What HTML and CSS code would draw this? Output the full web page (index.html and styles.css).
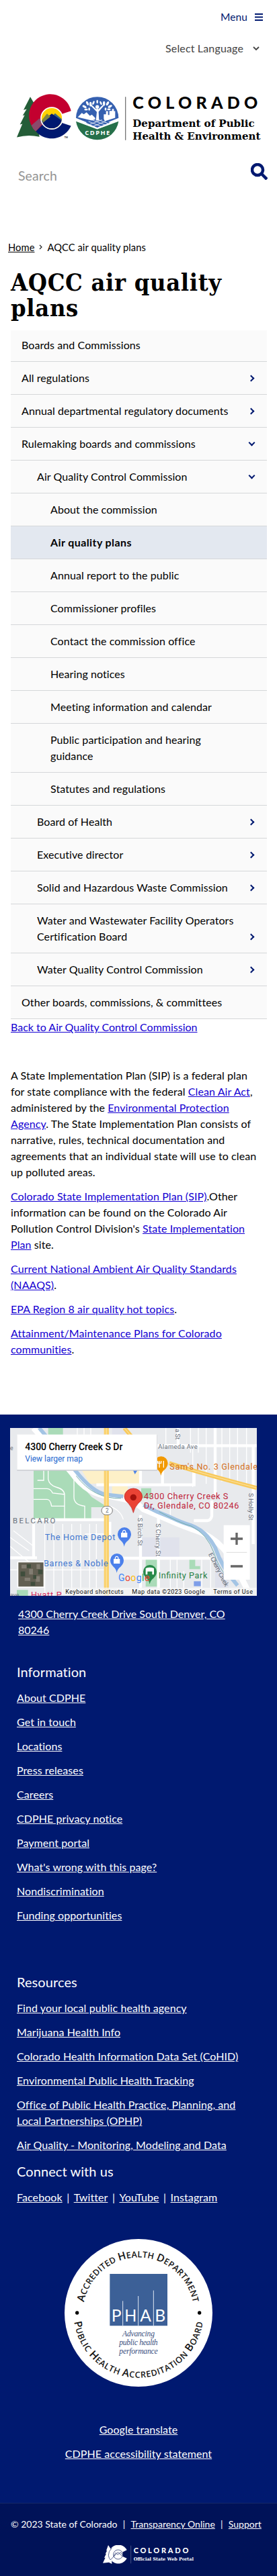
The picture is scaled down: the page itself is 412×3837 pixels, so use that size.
FILE: index.html
```html
<!DOCTYPE html>
<html lang="en">
<head>
<meta charset="utf-8">
<title>AQCC air quality plans</title>
<link rel="stylesheet" href="styles.css">
</head>
<body>
<header class="header">
  <div class="menu-row"><span class="menu-label">Menu</span>
    <svg class="burger" viewBox="0 0 12 11"><path d="M0 1h12M0 5.5h12M0 10h12"/></svg></div>
  <div class="lang-row"><span class="lang-label">Select Language</span>
    <svg class="lang-chev" viewBox="0 0 10 8"><path d="M1 2l4 4 4-4"/></svg></div>
  <svg class="logo" viewBox="75 432 1089 194">
    <path fill="#245d38" d="M135 432l25 42-7 2 18 38-10 2 15 95q-50-12-101 2l25-60-11 3 21-42-9 2 18-29-14 4z"/>
    <path fill="#c3002f" d="M317 495A95 96 0 1 0 160 587l71-59 41-18z"/>
    <path fill="#8a4a6b" d="M140 560l36-32 18 20-34 39q-14-11-20-27z"/>
    <path fill="#001970" d="M317 562A95 96 0 0 1 160 587l71-72 41 32z"/>
    <circle cx="231" cy="528" r="48" fill="#ffd100"/>
    <path fill="#82883e" d="M185 540l24-31 18 18 17-16 33 24v15l-92 1z"/>
    <path fill="#386685" d="M215 535l31-29 30 26-10 15z"/>
    <path fill="#001970" d="M184 541l11-4 36-30 45 32a48 48 0 0 1-92 2z"/>
    <path fill="#82883e" d="M191 531l19-24 15 14-35 28z"/>
    <circle cx="231" cy="528" r="48" fill="none" stroke="#fff" stroke-width="5"/>
    <text x="287" y="619" font-family="Lato" font-size="10" font-weight="700">TM</text>
    <circle cx="434" cy="528" r="96" fill="#fff"/>
    <path fill="#3560b0" d="M339 527a95 95 0 0 1 190 0l-95 38z"/>
    <path fill="#26704a" d="M339 542l95 35 95-35a96 96 0 0 1-190 0z"/>
    <path fill="#fff" d="M347 523l18-19 9 6 12-9 15 16 9-5 15 15v15zM463 530v-20h10v-14h9v17h6v-18h12v-9h8v10h6v30l-47 15z"/>
    <path fill="#3560b0" d="M383 548l52-19 56 19-57 22z"/>
    <path stroke="#fff" stroke-width="2.5" fill="none" d="M395 542l60 24M412 536l58 22M430 531l52 20M472 541l-56 23M455 535l-54 20"/>
    <path fill="#fff" d="M428 538l4-38-28-29 4-4 21 21 5-5 5 5 20-20 4 4-23 27 2 39z"/>
    <circle cx="434" cy="477" r="8" fill="#fff"/>
    <g fill="#fff"><ellipse cx="377" cy="476" rx="10" ry="5" transform="rotate(30 377 476)"/><ellipse cx="390" cy="461" rx="5" ry="10" transform="rotate(-25 390 461)"/><ellipse cx="404" cy="465" rx="5" ry="10"/><ellipse cx="417" cy="459" rx="4" ry="9" transform="rotate(25 417 459)"/><ellipse cx="434" cy="454" rx="4" ry="8"/><ellipse cx="450" cy="460" rx="4" ry="9" transform="rotate(-25 450 460)"/><ellipse cx="464" cy="462" rx="5" ry="10"/><ellipse cx="480" cy="462" rx="5" ry="10" transform="rotate(30 480 462)"/><ellipse cx="491" cy="475" rx="10" ry="5" transform="rotate(-30 491 475)"/><ellipse cx="398" cy="487" rx="4" ry="7"/><ellipse cx="471" cy="487" rx="4" ry="7"/><ellipse cx="384" cy="489" rx="8" ry="4"/><ellipse cx="486" cy="488" rx="8" ry="4"/></g>
    <path stroke="#fff" stroke-width="6" fill="none" d="M338 536l96 37 96-37"/>
    <text x="379" y="602" font-family="Open Sans" font-weight="700" font-size="28" fill="#fff" textLength="111">CDPHE</text>
    <path stroke="#777" stroke-width="4" d="M560 432v194"/>
    <text x="592" y="487" font-family="Lato" font-weight="900" font-size="75" textLength="558">COLORADO</text>
    <text class="slab" x="592" y="568" font-size="47" textLength="544" lengthAdjust="spacingAndGlyphs">Department of Public</text>
    <text class="slab" x="592" y="623" font-size="47" textLength="570" lengthAdjust="spacingAndGlyphs">Health &amp; Environment</text>
  </svg>
  <div class="search-row"><span class="search-label">Search</span>
    <svg class="search-icon" viewBox="0 0 25 25"><circle cx="10" cy="10" r="8" /><path d="M16 16l8 8"/></svg></div>
</header>
<main class="main">
  <nav class="crumbs"><a href="#">Home</a><svg class="crumb-sep" viewBox="0 0 5 8"><path d="M1 1l3 3-3 3"/></svg><span>AQCC air quality plans</span></nav>
  <h1 class="title">AQCC air quality<br>plans</h1>
  <ul class="side">
    <li class="first">Boards and Commissions</li>
    <li>All regulations<i class="right"></i></li>
    <li>Annual departmental regulatory documents<i class="right"></i></li>
    <li>Rulemaking boards and commissions<i class="down"></i></li>
    <li class="l2">Air Quality Control Commission<i class="down"></i></li>
    <li class="l3">About the commission</li>
    <li class="l3 active">Air quality plans</li>
    <li class="l3">Annual report to the public</li>
    <li class="l3">Commissioner profiles</li>
    <li class="l3">Contact the commission office</li>
    <li class="l3">Hearing notices</li>
    <li class="l3">Meeting information and calendar</li>
    <li class="l3">Public participation and hearing<br>guidance</li>
    <li class="l3">Statutes and regulations</li>
    <li class="l2">Board of Health<i class="right"></i></li>
    <li class="l2">Executive director<i class="right"></i></li>
    <li class="l2">Solid and Hazardous Waste Commission<i class="right"></i></li>
    <li class="l2">Water and Wastewater Facility Operators<br>Certification Board<i class="right"></i></li>
    <li class="l2">Water Quality Control Commission<i class="right"></i></li>
    <li>Other boards, commissions, &amp; committees</li>
  </ul>
  <a class="back" href="#">Back to Air Quality Control Commission</a>
  <article class="copy">
    <p>A State Implementation Plan (SIP) is a federal plan<br>for state compliance with the federal <a href="#">Clean Air Act</a>,<br>administered by the <a href="#">Environmental Protection<br>Agency</a>. The State Implementation Plan consists of<br>narrative, rules, technical documentation and<br>agreements that an individual state will use to clean<br>up polluted areas.</p>
    <p><a href="#">Colorado State Implementation Plan (SIP)</a>.Other<br>information can be found on the Colorado Air<br>Pollution Control Division's <a href="#">State Implementation<br>Plan</a> site.</p>
    <p><a href="#">Current National Ambient Air Quality Standards<br>(NAAQS)</a>.</p>
    <p><a href="#">EPA Region 8 air quality hot topics</a>.</p>
    <p><a href="#">Attainment/Maintenance Plans for Colorado<br>communities</a>.</p>
  </article>
</main>
<footer class="footer">
  <svg class="map" viewBox="45 111 1101 750">
    <path fill="#e8eaed" d="M45 111h1101v750H45z"/>
    <path fill="#e0e2ec" d="M630 600h170v90H630zM500 111h60v60h-60zM960 690h60v171h-60z"/>
    <path fill="#fdf0c8" d="M365 300h260v60H400zM500 370h70v45h-70z"/>
    <path fill="#aadbb8" d="M215 111h66v40h-66zM150 300h170q50 80 90 120l55 35v10h-58v57H150zM845 698h26v30h22v14h-48zM650 690h52v130h-52zM630 380h45v45h-45zM75 835h50v26H75z"/>
    <g fill="none" stroke="#fff">
      <path stroke-width="4" d="M345 111v40M375 111v40M405 111v40M195 300v45h-28M215 300v40q5 25 35 35 38 10 38 35v110M150 382h60q15 0 25 20l55 6M150 430h60q15 0 20 30h60M330 330v90q0 35 48 40v61M740 111v80M850 111v110M885 111v110M920 111v250M990 111v240M1025 111v230M1060 111v250M1100 111v250M860 200v175M760 370v140M200 540v320M240 540v320M280 540v320M320 540v320M360 540v320M400 540v320M430 540v320M60 570l90 70M45 600l85 60M45 640l90 75M45 745h430M380 585h90M490 460q50 20 60 60M520 830h620M760 700v160M790 700v160M820 750v110M900 700v160M940 700v160"/>
      <path stroke-width="13" d="M690 190h456M960 111v300M627 170v190M725 300v70M430 365h436v-70M150 521v170M150 521h320M45 691h120M490 693h450M627 500v361M707 500v361M795 111v80M1130 190v440M865 525h60q15 0 20-20v-70M490 530v80"/>
    </g>
    <path fill="none" stroke="#fff" stroke-width="26" d="M150 111l170 200q70 98 170 105l60 12q50 7 90 46l100 42q80 35 140 55 100 35 165 145l60 120"/>
    <path fill="none" stroke="#a3c4e4" stroke-width="17" d="M175 111l165 195q70 88 130 102l80 9M640 455l60 30 55 22q50 25 95 38 70 25 110 100 30 90 100 170"/>
    <path fill="none" stroke="#75afad" stroke-width="3" d="M340 325q80 105 200 100M710 485q90 50 145 65 70 35 100 120 15 55 60 110"/>
    <path fill="none" stroke="#fbd16c" stroke-width="22" d="M475 111v750"/><path fill="none" stroke="#fae19b" stroke-width="4" d="M475 111v750"/>
    <path fill="none" stroke="#f8c95b" stroke-width="18" d="M555 111l40 48M755 268q150 48 391 111"/>
    <path fill="none" stroke="#fbe5aa" stroke-width="3" d="M555 111l40 48M755 268q150 48 391 111"/>
    <rect x="453" y="461" width="49" height="38" rx="19" fill="#fff" stroke="#777" stroke-width="3"/>
    <path fill="#7e9ee8" d="M865 796h31v22h-31z"/>
    <g class="mt" fill="#68707b" font-size="29">
      <text x="471" y="490" font-size="25">2</text>
      <text x="706" y="203" font-size="28" textLength="175">Alameda Ave</text>
      <text x="57" y="538" font-size="34" textLength="190">BELCARO</text>
      <text transform="translate(616 512)rotate(90)" textLength="126">S Birch St</text>
      <text transform="translate(695 538)rotate(90)" textLength="147">S Cherry St</text>
      <text transform="translate(1110 402)rotate(90)" textLength="122">S Holly St</text>
      <text transform="translate(782 115)rotate(90)" textLength="48">a St</text>
      <text transform="translate(929 675)rotate(63)" textLength="165">E Cherry Creek</text>
      <text x="45" y="868" font-size="26">ave</text><text x="45" y="210" font-size="26">e</text>
    </g>
    <path fill="#4c83e8" d="M592 296h24l-14 22z"/>
    <g class="mt" font-size="38">
      <text x="757" y="297" fill="#d57123" textLength="392">Sam's No. 3 Glendale</text>
      <text x="642" y="429" fill="#bf2238" textLength="376">4300 Cherry Creek S</text>
      <text x="642" y="471" fill="#bf2238" textLength="424">Dr, Glendale, CO 80246</text>
      <text x="200" y="612" fill="#3f77d0" textLength="314">The Home Depot</text>
      <text x="195" y="730" fill="#3f77d0" textLength="287">Barnes &amp; Noble</text>
      <text x="707" y="782" fill="#278044" textLength="218">Infinity Park</text>
      <text x="138" y="869" fill="#d52c60" textLength="137">Hyatt P</text>
    </g>
    <path fill="#ea4335" stroke="#b91e1e" stroke-width="2" d="M595 490q-5-24-22-42-18-15-18-29a40 38 0 0 1 80 0q0 14-18 29-17 18-22 42z"/><circle cx="595" cy="421" r="14" fill="#a3120d"/>
    <path fill="#f29900" d="M718 324q-3-17-15-27-14-13-14-29a30 30 0 0 1 60 0q0 16-14 29-14 10-17 27z"/><path stroke="#fff" stroke-width="4" fill="none" d="M711 258v30M719 258v10h-15v-10M730 258v30"/>
    <path fill="#4b80eb" d="M554 641q-3-17-15-27-14-13-14-29a30 30 0 0 1 60 0q0 16-14 29-14 10-17 27zM521 758q-3-17-15-27-14-13-14-29a30 30 0 0 1 60 0q0 16-14 29-14 10-17 27z"/>
    <path fill="#fff" d="M540 579h28v21h-28zM507 696h28v21h-28z"/><path stroke="#fff" stroke-width="4" fill="none" d="M547 580q0-12 7-12t7 12M514 697q0-12 7-12t7 12"/>
    <path fill="#278a49" d="M668 809q-3-17-15-27-14-13-14-29a30 30 0 0 1 60 0q0 16-14 29-14 10-17 27z"/><path fill="#fff" d="M650 738q18-8 37 0v28h-8v-14h-21v14h-8z"/>
    <text class="mt" x="528" y="796" font-size="42" textLength="139"><tspan fill="#4285f4">G</tspan><tspan fill="#ea4335">o</tspan><tspan fill="#fbbc05">o</tspan><tspan fill="#4285f4">g</tspan><tspan fill="#34a853">l</tspan><tspan fill="#ea4335">e</tspan></text>
    <path fill="#c9cbd0" d="M76 142h626v160H76z"/><path fill="#fff" d="M76 140h624v158H76z"/>
    <text class="mt" x="112" y="210" font-size="42" font-weight="500" fill="#000" textLength="435">4300 Cherry Creek S Dr</text>
    <text class="mt" x="112" y="261" font-size="36" fill="#2367cf" textLength="257">View larger map</text>
    <path fill="#fff" d="M998 545h117v244H998z"/><path stroke="#ddd" stroke-width="3" d="M1010 667h92"/><path stroke="#666" stroke-width="10" d="M1029 606h54M1056 579v54M1029 729h54"/>
    <path fill="#fff" d="M77 707h122v118H77z"/><path fill="#625f52" d="M82 712h112v108H82z"/>
    <path fill="#827d72" d="M96 722h22v17h-22zM130 740h17v26h-17zM163 719h16v22h-16zM110 780h25v14h-25zM160 773h18v25h-18z"/><path fill="#3f4d3c" d="M120 720h18v17h-18zM92 752h20v22H92zM148 768h14v17h-14zM170 744h20v20h-20zM137 799h20v17h-20z"/>
    <path fill="#f5f5f5" fill-opacity=".75" d="M284 824h862v37H284z"/>
    <g class="mt" font-size="27" fill="#111"><text x="292" y="851" textLength="259">Keyboard shortcuts</text><text x="589" y="851" textLength="325">Map data ©2023 Google</text><text x="952" y="851" textLength="176">Terms of Use</text></g>
  </svg>
  <a class="address" href="#">4300 Cherry Creek Drive South Denver, CO<br>80246</a>
  <section class="group info">
    <h2>Information</h2>
    <a href="#">About CDPHE</a><a href="#">Get in touch</a><a href="#">Locations</a><a href="#">Press releases</a><a href="#">Careers</a><a href="#">CDPHE privacy notice</a><a href="#">Payment portal</a><a href="#">What's wrong with this page?</a><a href="#">Nondiscrimination</a><a href="#">Funding opportunities</a>
  </section>
  <section class="group resources">
    <h2>Resources</h2>
    <a href="#">Find your local public health agency</a><a href="#">Marijuana Health Info</a><a href="#">Colorado Health Information Data Set (CoHID)</a><a href="#">Environmental Public Health Tracking</a><a href="#">Office of Public Health Practice, Planning, and<br>Local Partnerships (OPHP)</a><a href="#">Air Quality - Monitoring, Modeling and Data</a>
    <h2 class="connect">Connect with us</h2>
    <div class="social"><a href="#">Facebook</a><b>|</b><a href="#">Twitter</a><b>|</b><a href="#">YouTube</a><b>|</b><a href="#">Instagram</a></div>
  </section>
  <svg class="badge" viewBox="78 75 660 660">
    <circle cx="408" cy="405" r="330" fill="#fff"/>
    <path id="arcTop" fill="none" d="M164.6 357.7A248 248 0 0 1 651.4 357.7"/>
    <path id="arcBottom" fill="none" d="M120.8 445.4A290 290 0 0 0 695.2 445.4"/>
    <text class="ring" textLength="684"><textPath href="#arcTop" textLength="684"><tspan class="cap">A</tspan>CCREDITED <tspan class="cap">H</tspan>EALTH <tspan class="cap">D</tspan>EPARTMENT</textPath></text>
    <text class="ring" textLength="828"><textPath href="#arcBottom" textLength="828"><tspan class="cap">P</tspan>UBLIC <tspan class="cap">H</tspan>EALTH <tspan class="cap">A</tspan>CCREDITATION <tspan class="cap">B</tspan>OARD</textPath></text>
    <circle cx="134" cy="405" r="8"/><circle cx="680" cy="405" r="8"/>
    <path fill="#3c6097" d="M280 231h257v232H280z"/>
    <path stroke="#dfe7f3" stroke-width="3" d="M338 352v110M407 330v132M475 305v157"/>
    <g font-family="Lato" font-size="74" fill="#fff"><text x="287" y="443">P</text><text x="346" y="443" textLength="54" lengthAdjust="spacingAndGlyphs">H</text><text x="415" y="443">A</text><text x="481" y="443">B</text></g>
    <g font-family="Liberation Serif" font-style="italic" font-size="35" fill="#3b4f80"><text x="336" y="510" textLength="144">Advancing</text><text x="322" y="549" textLength="172">public health</text><text x="322" y="587" textLength="172">performance</text></g>
  </svg>
  <div class="center-links"><a href="#">Google translate</a><a href="#">CDPHE accessibility statement</a></div>
  <div class="bottom">
    <div class="legal">© 2023 State of Colorado<b>|</b><a href="#">Transparency Online</a><b>|</b><a href="#">Support</a></div>
    <svg class="portal" viewBox="459 632 405 84">
      <path fill="#fff" d="M483 632l13 20-3 1 6 14v49l-13-7-27 3 11-24-5 1 9-19-4 1 8-15-4 1z"/>
      <path fill="#fff" d="M566 654a42 42 0 1 0 0 37l-18-8v-20z"/>
      <g fill="none" stroke="#001258" stroke-width="2"><circle cx="527" cy="674" r="21"/><path d="M499 645q-16 15-15 33 2 14 9 20l33-34 21 18M507 681l10-15 9 9 11-11 10 11"/></g>
      <path stroke="#65709c" stroke-width="2" d="M584 634v80"/>
      <text x="596" y="668" font-family="Lato" font-weight="900" font-size="33" fill="#fff" textLength="245">COLORADO</text>
      <text x="596" y="702" class="slab" font-size="20" fill="#fff" textLength="268" lengthAdjust="spacingAndGlyphs">Official State Web Portal</text>
    </svg>
  </div>
</footer>
</body>
</html>
```
FILE: styles.css
```css
* { box-sizing: border-box; }
body { margin: 0; background: #fff; color: #000; font: 16px/24px Lato, "Noto Sans", sans-serif; letter-spacing: .08px; white-space: nowrap; }
svg { display: block; letter-spacing: 0; }
.slab { font-family: "DejaVu Serif Condensed", "DejaVu Serif", serif; font-stretch: condensed; font-weight: 700; }
.header { height: 340px; padding: 13px 14px 0 25px; display: flex; flex-direction: column; }
.menu-row, .lang-row, .search-row { display: flex; align-items: center; height: 24px; }
.menu-row { justify-content: flex-end; gap: 11px; padding-right: 7px; color: #001970; }
.menu-label { font-size: 15.5px; }
.burger { width: 12px; height: 11px; stroke: #001970; stroke-width: 2; }
.lang-row { justify-content: flex-end; gap: 14px; padding-right: 12px; margin-top: 23px; color: #444; letter-spacing: .15px; }
.lang-chev { width: 10px; height: 8px; fill: none; stroke: #444; stroke-width: 1.8; }
.logo { width: 363px; height: 65px; margin-top: 60px; overflow: visible; }
.search-row { justify-content: space-between; align-items: flex-start; height: 40px; margin-top: 34px; padding-left: 2px; font-size: 19.5px; color: #949494; }
.search-label { margin-top: 7px; }
.search-icon { width: 25px; height: 25px; fill: none; stroke: #001970; stroke-width: 4.5; }
.main { padding: 16px 15px 0 16px; height: 1767px; }
.crumbs { display: flex; align-items: center; height: 24px; margin-left: -4px; font-size: 14.7px; }
.crumbs a { color: #000; }
.crumb-sep { width: 5px; height: 8px; margin: 0 7px; fill: none; stroke: #222; stroke-width: 1.2; }
.title { margin: 21px 0 15px; font: 700 36px/38px "DejaVu Serif Condensed", "DejaVu Serif", serif; font-stretch: condensed; letter-spacing: .65px; }
.side { list-style: none; margin: 0; padding: 0; }
.side li { display: flex; justify-content: space-between; align-items: flex-end; padding: 12px 16px; background: #fafafa; border-bottom: 1px solid #d5d7d9; }
.side .first { padding-top: 10px; }
.side .l2 { padding-left: 39px; }
.side .l3 { padding-left: 59px; }
.side .active { background: #e3e8f0; font-weight: 700; letter-spacing: .4px; }
.side i { width: 7px; height: 7px; border: solid #001970; border-width: 0 2.5px 2.5px 0; flex: none; }
.side .right { transform: rotate(-45deg); margin: 0 4px 8px; }
.side .down { transform: rotate(45deg); margin: 0 3px 10px; }
.back { display: block; width: max-content; letter-spacing: 0; }
.back, .copy a { color: #1400d2; }
.copy { margin-top: 48px; }
.copy p { margin: 0 0 12px; }
.footer { height: 1730px; padding-top: 20px; background: #001970; color: #fff; }
.footer a { color: #fff; }
.map { width: 367px; height: 250px; margin-left: 15px; }
.mt { font-family: Roboto, sans-serif; }
.address { display: block; margin: 15px 0 0 27px; letter-spacing: 0; }
.group { padding-left: 25px; display: flex; flex-direction: column; align-items: flex-start; gap: 12px; }
.group h2 { margin: 0 0 1px; font-size: 20px; font-weight: 400; line-height: 27px; }
.group .connect { margin-top: 2px; }
.social b { display: inline-block; width: 17px; text-align: center; font-weight: 400; }
.info { margin-top: 37px; }
.resources { margin-top: 74px; }
.badge { width: 220px; height: 220px; margin: 50px 0 0 96px; }
.ring { font: 600 38px "Open Sans", sans-serif; fill: #161616; }
.cap { font-size: 47px; }
.center-links { display: flex; flex-direction: column; align-items: center; gap: 12px; margin-top: 52px; }
.bottom { height: 109px; margin-top: 61px; padding-top: 19px; background: #001258; border-top: 1px solid #162a68; }
.legal { display: flex; padding-left: 16px; font-size: 14px; letter-spacing: 0; }
.legal b { width: 20px; text-align: center; font-weight: 400; }
.portal { width: 135px; height: 28px; margin: 19px 0 0 153px; }
```
